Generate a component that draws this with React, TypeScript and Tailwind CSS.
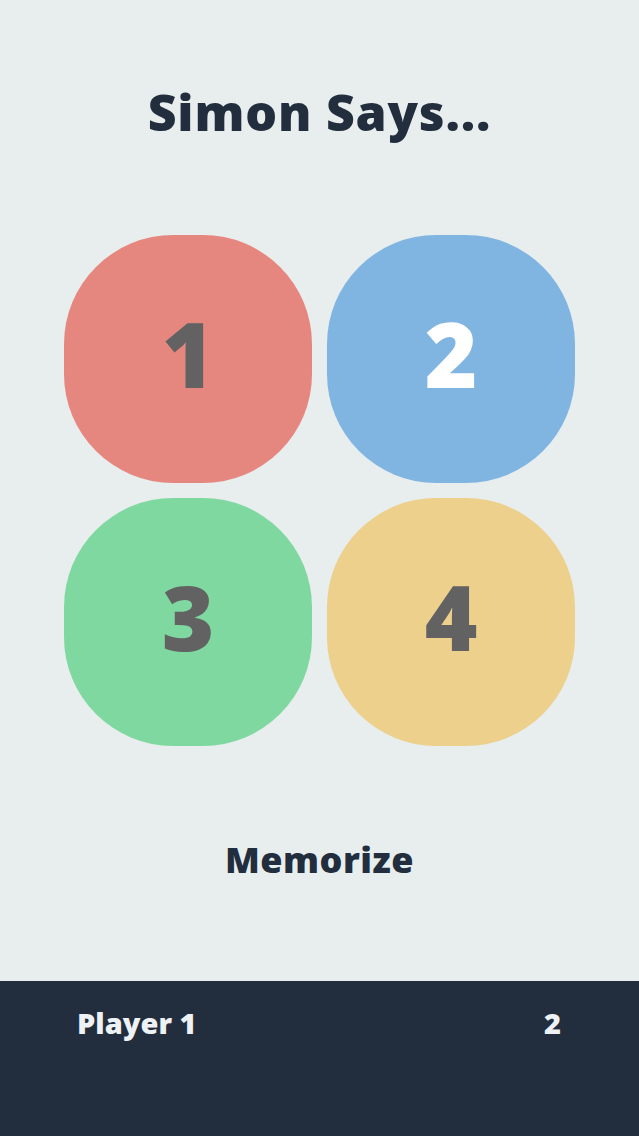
import React from "react";

const font = { fontFamily: "'Open Sans', Lato, sans-serif" };

export default function App() {
  return (
    <div className="w-[639px] h-[1136px] flex flex-col bg-[#e8edee]" style={font}>
      <div className="h-[981px] flex flex-col items-center">
        <h1 className="mt-[82px] h-[60px] leading-[60px] text-[50px] font-extrabold text-[#222d3d] tracking-[0.8px]">
          Simon Says...
        </h1>
        <div className="mt-[93px] grid grid-cols-[248px_248px] gap-[15px]">
          <div className="h-[248px] pb-[12px] rounded-[44%] bg-[#e6877f] flex items-center justify-center text-[90px] font-extrabold text-[#626262]">1</div>
          <div className="h-[248px] pb-[12px] rounded-[44%] bg-[#80b5e2] flex items-center justify-center text-[90px] font-extrabold text-white">2</div>
          <div className="h-[248px] pb-[12px] rounded-[44%] bg-[#7fd8a0] flex items-center justify-center text-[90px] font-extrabold text-[#626262]">3</div>
          <div className="h-[248px] pb-[12px] rounded-[44%] bg-[#ecd08c] flex items-center justify-center text-[90px] font-extrabold text-[#626262]">4</div>
        </div>
        <div className="mt-[92px] h-[44px] leading-[44px] text-[36px] font-extrabold text-[#222d3d] tracking-[0.5px]">Memorize</div>
      </div>
      <div className="h-[155px] bg-[#222d3d] flex items-start justify-between pl-[77px] pr-[78px] pt-[24px]">
        <span className="text-[29px] leading-[36px] font-extrabold text-[#eef2f5]">Player 1</span>
        <span className="text-[29px] leading-[36px] font-extrabold text-[#eef2f5]">2</span>
      </div>
    </div>
  );
}
